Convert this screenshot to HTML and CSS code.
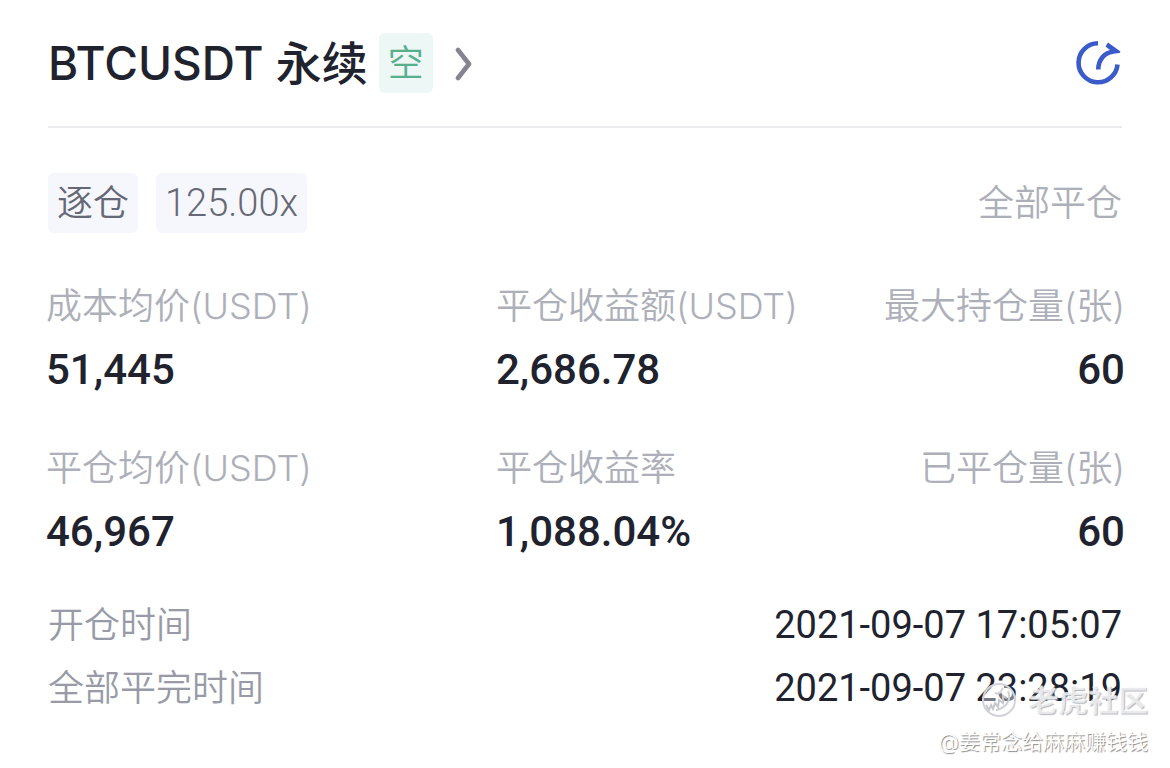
FILE: index.html
```
<!DOCTYPE html>
<html lang="zh-CN">
<head>
  <meta charset="UTF-8">
  <meta name="viewport" content="width=device-width, initial-scale=1">
  <title>BTCUSDT 永续</title>
  <link rel="stylesheet" href="styles.css">
</head>
<body>
  <main class="card">
    <header class="header">
      <a class="pair" href="#">
        <h1>BTCUSDT 永续</h1>
        <span class="side">空</span>
        <svg class="chevron" width="20" height="36" viewBox="0 0 20 36" aria-hidden="true">
          <path d="M5 5 L16 19 L5 33" fill="none" stroke="#828591" stroke-width="4.600" stroke-linecap="round" stroke-linejoin="round"/>
        </svg>
      </a>
      <button class="share" type="button" aria-label="分享">
        <svg width="48" height="48" viewBox="0 0 48 48" aria-hidden="true">
          <path d="M24 4.300 A19.500 19.500 0 1 0 43.500 25.500" fill="none" stroke="#3b5bcb" stroke-width="4.600"/>
          <path d="M24.300 30.500 C24.300 21 30 14 39 12.500" fill="none" stroke="#3b5bcb" stroke-width="4.600"/>
          <path d="M34 3.500 L46.500 12.500 L45.500 14 L39 14.800 L36 11 L31.500 7.500 Z" fill="#3b5bcb"/>
        </svg>
      </button>
    </header>

    <div class="tags">
      <span class="tag">逐仓</span>
      <span class="tag leverage">125.00x</span>
      <span class="status">全部平仓</span>
    </div>

    <dl class="stats">
      <div class="stat">
        <dt>成本均价(USDT)</dt>
        <dd>51,445</dd>
      </div>
      <div class="stat">
        <dt>平仓收益额(USDT)</dt>
        <dd>2,686.78</dd>
      </div>
      <div class="stat right">
        <dt>最大持仓量(张)</dt>
        <dd>60</dd>
      </div>
      <div class="stat">
        <dt>平仓均价(USDT)</dt>
        <dd>46,967</dd>
      </div>
      <div class="stat">
        <dt>平仓收益率</dt>
        <dd>1,088.04%</dd>
      </div>
      <div class="stat right">
        <dt>已平仓量(张)</dt>
        <dd>60</dd>
      </div>
    </dl>

    <dl class="times">
      <div class="time-row">
        <dt>开仓时间</dt>
        <dd>2021-09-07 17:05:07</dd>
      </div>
      <div class="time-row">
        <dt>全部平完时间</dt>
        <dd>2021-09-07 23:28:19</dd>
      </div>
    </dl>

    <div class="watermark">
      <div class="brand">
        <svg width="36" height="36" viewBox="0 0 36 36" aria-hidden="true">
          <circle cx="18" cy="18" r="16" fill="#fff" fill-opacity=".4" stroke="#d2d3d8" stroke-width="2"/>
          <path d="M14 11 C19 13 20 9 22 6 M27 9 C31 18 25 26 15 28" fill="none" stroke="#cfd0d6" stroke-width="2"/>
          <path d="M5 23 l3 5 2-5 2 4 2-6 3 4 1-7 4 3 0-7 4 2" fill="none" stroke="#c6c7ce" stroke-width="2"/>
        </svg>
        <span>老虎社区</span>
      </div>
      <p class="author">@姜常念给麻麻赚钱钱</p>
    </div>
  </main>
</body>
</html>
```
FILE: styles.css
```
* {
  box-sizing: border-box;
}

body {
  margin: 0;
  background: #fff;
  color: #20222e;
  font-family: Inter, "Noto Sans CJK SC", sans-serif;
}

h1, dl, dd, p {
  margin: 0;
}

.card {
  position: relative;
  padding: 32px 48px 56px;
}

.header {
  display: flex;
  align-items: center;
  justify-content: space-between;
  padding-bottom: 32px;
  border-bottom: 2px solid #ececee;
}

.pair {
  display: flex;
  align-items: center;
  color: inherit;
  text-decoration: none;
}

h1 {
  font-size: 46px;
  font-weight: 500;
  line-height: 62px;
}

.side {
  margin: 0 20px 0 11px;
  padding: 0 9px;
  border-radius: 6px;
  background: #edf7f5;
  color: #58ae8d;
  font-size: 36px;
  font-weight: 350;
  line-height: 60px;
}

.share {
  display: flex;
  padding: 0;
  border: none;
  background: none;
  cursor: pointer;
}

.tags {
  display: flex;
  align-items: center;
  gap: 18px;
  margin-top: 45px;
  font-size: 36px;
  font-weight: 350;
  line-height: 60px;
}

.tag {
  padding: 0 9px;
  border-radius: 6px;
  background: #f6f7fc;
  color: #666975;
}

.leverage {
  font-family: Roboto, sans-serif;
  font-size: 38px;
}

.status {
  margin-left: auto;
  color: #adafb9;
}

.stats {
  display: grid;
  grid-template-columns: 41.7% 1fr auto;
  row-gap: 34px;
  margin: 41px -3px 0 -2px;
}

.stat dt {
  color: #adafb9;
  font-size: 36px;
  font-weight: 350;
  line-height: 64px;
}

.stat dd {
  font-family: Roboto, sans-serif;
  font-size: 42px;
  font-weight: 500;
  line-height: 64px;
}

.right {
  text-align: right;
}

.times {
  margin-top: 30px;
}

.time-row {
  display: flex;
  justify-content: space-between;
  font-size: 36px;
  line-height: 63px;
}

.time-row dt {
  color: #989ba7;
  font-weight: 350;
}

.time-row dd {
  font-family: Roboto, sans-serif;
  font-size: 38px;
}

/* watermark lies over the last time row */
.watermark {
  position: absolute;
  right: 22px;
  bottom: 20px;
  text-align: right;
  pointer-events: none;
}

.brand {
  display: flex;
  align-items: center;
  justify-content: flex-end;
  gap: 11px;
  color: rgba(255, 255, 255, 0.7);
  font-size: 30px;
  font-weight: 700;
  line-height: 40px;
  text-shadow: 1px 1px 1px #b4b6be;
}

.author {
  margin-top: 8px;
  color: #fff;
  font-size: 21px;
  font-weight: 350;
  line-height: 28px;
  text-shadow: 1px 1px 1px #888;
}
```
